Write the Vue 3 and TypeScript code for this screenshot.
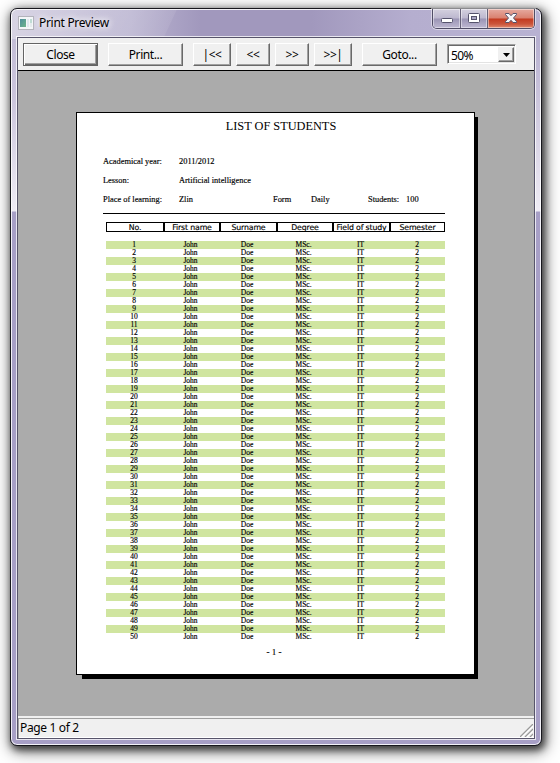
<script setup lang="ts">
interface NavButton {
  label: string
  kind: string
}

const buttons: NavButton[] = [
  { label: 'Close', kind: 'wide focused' },
  { label: 'Print...', kind: 'wide print' },
  { label: '|<<', kind: 'edge' },
  { label: '<<', kind: 'step' },
  { label: '>>', kind: 'step' },
  { label: '>>|', kind: 'edge' },
  { label: 'Goto...', kind: 'wide goto' },
]

const columns: string[] = ['No.', 'First name', 'Surname', 'Degree', 'Field of study', 'Semester']
const rows: string[][] = Array.from({ length: 50 }, (_, i) => [String(i + 1), 'John', 'Doe', 'MSc.', 'IT', '2'])
</script>

<template>
  <div class="desktop">
    <div class="window">
      <header class="titlebar">
        <svg class="app-icon" width="16" height="14" viewBox="0 0 16 14">
          <defs>
            <linearGradient id="pane" x1="0" y1="0" x2="1" y2="1">
              <stop offset="0" stop-color="#4d8d9c" />
              <stop offset="1" stop-color="#6fb58a" />
            </linearGradient>
          </defs>
          <rect x="0.5" y="0.5" width="15" height="13" fill="#f4f6f8" stroke="#b3b3bb" />
          <rect x="2" y="3" width="6" height="8" fill="url(#pane)" />
          <rect x="9" y="3" width="2" height="8" fill="#dfe7ee" />
          <rect x="12" y="3" width="2" height="4" fill="#bfdcd4" />
          <rect x="12" y="7" width="2" height="4" fill="#e6ebee" />
        </svg>
        <span class="caption">Print Preview</span>
        <div class="controls">
          <span class="control min">
            <svg width="28" height="18" viewBox="0 0 28 18"><rect x="8.5" y="9.5" width="11" height="4" rx="1" fill="#fff" stroke="#55536c" /></svg>
          </span>
          <span class="control max">
            <svg width="26" height="18" viewBox="0 0 26 18"><rect x="7.5" y="4.5" width="11" height="9" rx="1" fill="#fff" stroke="#55536c" /><rect x="10.5" y="7.5" width="5" height="3" fill="#aaa6c3" stroke="#55536c" /></svg>
          </span>
          <span class="control shut">
            <svg width="47" height="18" viewBox="0 0 47 18"><path d="M18.500 4.500h3.500l2 2.200 2-2.200h3.500v1L26.500 9l3 3.500v1H26l-2-2.200-2 2.200h-3.500v-1l3-3.500-3-3.500z" fill="#f7f7f9" stroke="#56536a" /></svg>
          </span>
        </div>
      </header>

      <main class="client">
        <div class="toolbar">
          <button v-for="b in buttons" :key="b.label" type="button" :class="['btn', b.kind]">{{ b.label }}</button>
          <div class="combo">
            <span class="value">50%</span>
            <span class="drop"><svg width="7" height="4" viewBox="0 0 7 4"><path d="M0 0h7L3.500 4z" fill="#000" /></svg></span>
          </div>
        </div>

        <div class="canvas">
          <article class="sheet">
            <h1>LIST OF STUDENTS</h1>
            <div class="info">
              <span>Academical year:</span><span>2011/2012</span><i /><i /><i /><i />
              <span>Lesson:</span><span>Artificial intelligence</span><i /><i /><i /><i />
              <span>Place of learning:</span><span>Zlin</span><span>Form</span><span>Daily</span><span>Students:</span><span>100</span>
            </div>
            <div class="rule" />
            <div class="head">
              <span v-for="c in columns" :key="c">{{ c }}</span>
            </div>
            <div class="body">
              <div v-for="r in rows" :key="r[0]" class="row">
                <span v-for="(cell, i) in r" :key="i">{{ cell }}</span>
              </div>
            </div>
            <footer>- 1 -</footer>
          </article>
        </div>

        <div class="status">
          <span>Page 1 of 2</span>
          <svg class="grip" width="13" height="13" viewBox="0 0 13 13">
            <path d="M1 13L13 1M6 13L13 6M11 13L13 11" stroke="#fff" stroke-width="2.500" />
            <path d="M0 13L13 0M5 13L13 5M10 13L13 10" stroke="#999" stroke-width="1.300" />
          </svg>
        </div>
      </main>
    </div>
  </div>
</template>

<style>
body {
  margin: 0;
  background: #fff;
}
</style>

<style scoped>
* {
  box-sizing: border-box;
}
.desktop {
  width: 560px;
  height: 763px;
  padding: 8px 0 0 10px;
  overflow: hidden;
  font-family: 'Noto Sans', 'Open Sans', sans-serif;
  color: #000;
}
.window {
  width: 532px;
  height: 738px;
  border: 1px solid #17171d;
  border-radius: 7px;
  padding: 0 6px 5px;
  box-shadow: inset 0 0 0 1px rgba(255, 255, 255, 0.85), 2px 3px 7px 1px rgba(0, 0, 0, 0.6), 2px 4px 15px 2px rgba(0, 0, 0, 0.5);
  background:
    linear-gradient(115deg, rgba(255, 255, 255, 0.35) 0, rgba(255, 255, 255, 0.08) 150px, transparent 151px) 0 0 / 100% 30px no-repeat,
    linear-gradient(#c3bdd7, #cbc5dc 60px, #efecf5 173px, transparent 174px) 0 29px / 6px 174px no-repeat,
    linear-gradient(#b5afcf, #cbc5dc 60px, #efecf5 173px, transparent 174px) 100% 29px / 7px 174px no-repeat,
    linear-gradient(90deg, #c3bdd5 0, #b9b3d0 120px, #a198bd 190px, #a198bd 300px, #b5aecf 400px, #b8b2d2 100%) 0 0 / 100% 30px no-repeat,
    #a79fc6;
}
.titlebar {
  height: 28px;
  width: 518px;
  display: flex;
  padding-left: 1px;
}
.app-icon {
  margin-top: 7px;
}
.caption {
  font-size: 12px;
  line-height: 27px;
  margin-left: 5px;
  letter-spacing: -0.3px;
  text-shadow: 0 0 6px #fff, 0 0 9px #fff;
}
.controls {
  margin-left: auto;
  display: flex;
  height: 20px;
  border: 1px solid #504d66;
  border-top: 0;
  border-radius: 0 0 5px 5px;
  box-shadow: 0 0 0 1px rgba(255, 255, 255, 0.5);
  overflow: hidden;
}
.control {
  display: block;
  height: 19px;
  box-shadow: inset 0 0 0 1px rgba(255, 255, 255, 0.45);
  background: linear-gradient(#d4d1df, #bdb8cf 9px, #9b95b5 10px, #bdb7d1);
}
.control svg {
  display: block;
}
.min {
  width: 28px;
  border-right: 1px solid #656178;
}
.max {
  width: 27px;
  border-right: 1px solid #656178;
}
.shut {
  width: 46px;
  background: linear-gradient(#e6aaa0, #d9816f 9px, #c33a20 10px, #cb553b 15px, #e08a70);
}
.shut svg {
  margin-left: -1px;
}
.client {
  width: 518px;
  height: 702px;
  border: 1px solid #57546a;
  box-shadow: 0 0 0 1px rgba(255, 255, 255, 0.75);
  background: #f0f0f0;
}
.toolbar {
  height: 33px;
  border-bottom: 1px solid #000;
  background: #f0f0f0;
  display: flex;
  align-items: flex-start;
  padding: 5px 0 0 5px;
}
.btn {
  height: 23px;
  padding: 0;
  border: 1px solid;
  border-color: #fff #696969 #696969 #fff;
  border-radius: 0;
  box-shadow: inset -1px -1px #a0a0a0;
  background: #f0f0f0;
  color: #000;
  font: 12px/20px 'Noto Sans', sans-serif;
  letter-spacing: -0.4px;
  margin-right: 5px;
}
.wide {
  width: 75px;
  margin-right: 10px;
}
.focused {
  border-color: #646464;
  box-shadow: inset 1px 1px #fff, inset -1px -1px #696969, inset -2px -2px #a0a0a0;
}
.edge {
  width: 38px;
}
.step {
  width: 34px;
}
.edge:nth-child(6) {
  margin-right: 10px;
}
.combo {
  width: 69px;
  height: 20px;
  margin-top: 1px;
  border: 1px solid;
  border-color: #a0a0a0 #fff #fff #a0a0a0;
  box-shadow: inset 1px 1px #696969, inset -1px -1px #e3e3e3;
  background: #fff;
  display: flex;
  padding: 2px 1px 1px 3px;
  font-size: 12px;
}
.value {
  line-height: 17px;
  letter-spacing: -0.6px;
}
.drop {
  margin-left: auto;
  width: 16px;
  height: 15px;
  display: grid;
  place-items: center;
  background: #f0f0f0;
  border: 1px solid;
  border-color: #f0f0f0 #696969 #696969 #f0f0f0;
  box-shadow: inset -1px -1px #a0a0a0;
}
.canvas {
  height: 645px;
  background: #ababab;
  padding: 41px 0 0 58px;
  isolation: isolate;
}
.sheet {
  position: relative;
  width: 399px;
  height: 563px;
  border: 1px solid #000;
  background: #fff;
  padding: 0 29px 0 26px;
  font-family: 'Liberation Serif', serif;
  -webkit-text-stroke: 0.15px #000;
}
.sheet::before {
  content: '';
  position: absolute;
  z-index: -1;
  inset: 4px -4px -5px 5px;
  background: linear-gradient(#000, #000) 100% 0 / 4px 100% no-repeat, linear-gradient(#000, #000) 0 100% / 100% 5px no-repeat;
}
h1 {
  margin: 0 0 0 14px;
  height: 39px;
  font-size: 12.300px;
  font-weight: 400;
  line-height: 26px;
  text-align: center;
  -webkit-text-stroke: 0;
}
.info {
  display: grid;
  grid-template-columns: 76px 94px 38px 57px 38px 1fr;
  grid-auto-rows: 19px;
  font-size: 8.400px;
  line-height: 20px;
  white-space: nowrap;
}
.rule {
  height: 1px;
  margin: 4px 0 8px;
  background: #000;
  width: 342px;
}
.head,
.row {
  display: grid;
  grid-template-columns: 56px 57px 56px 57px 57px 56px;
  width: 339px;
  margin-left: 3px;
  text-align: center;
}
.head {
  grid-template-columns: 56px 56px 57px 56px 57px 55px;
  height: 10px;
  border: 1px solid #000;
  font: 7.800px/9px 'DejaVu Sans', sans-serif;
  letter-spacing: -0.15px;
  white-space: nowrap;
}
.head span {
  height: 8px;
}
.head span + span {
  border-left: 2px solid #000;
}
.body {
  margin-top: 9px;
}
.row {
  height: 8px;
  font-size: 7.500px;
  line-height: 8px;
}
.row:nth-child(odd) {
  background: #d0e5a0;
}
footer {
  margin-top: 6px;
  font-size: 9px;
  line-height: 10px;
  text-align: center;
}
.status {
  height: 22px;
  border-top: 2px solid #f0f0f0;
  box-shadow: inset 0 1px #a0a0a0, inset 1px 0 #a0a0a0, inset 0 -1px #fff;
  display: flex;
  justify-content: space-between;
  align-items: flex-end;
  font-size: 12px;
  letter-spacing: -0.35px;
  line-height: 18px;
  padding: 0 1px 1px 2px;
}
</style>
